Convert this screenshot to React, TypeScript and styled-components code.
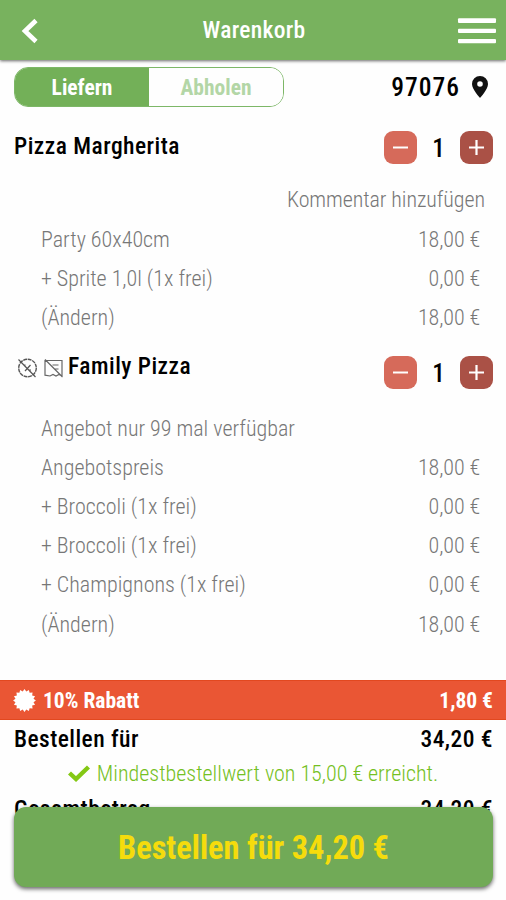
import React from "react";
import styled, { createGlobalStyle, css } from "styled-components";

const GlobalStyle = createGlobalStyle`
  *, *::before, *::after { box-sizing: border-box; }
  body {
    margin: 0;
    background: #fefefe;
    font-family: "Roboto Condensed", Roboto, "Liberation Sans", sans-serif;
    font-stretch: 75%;
    overflow: hidden;
  }
  button { font: inherit; border: 0; padding: 0; }
`;

const Screen = styled.div`
  display: flex;
  flex-direction: column;
  position: relative;
  height: 900px;
  overflow: hidden;
`;

const Header = styled.header`
  flex: none;
  display: grid;
  grid-template-columns: 60px 1fr 60px;
  align-items: center;
  height: 60px;
  background: #78b25e;
  color: #fff;
  box-shadow: 0 1px 3px rgba(0, 0, 0, 0.6);
`;

const HeaderIcon = styled.svg`
  display: block;
`;

const Title = styled.h1`
  margin: 0;
  padding-left: 2px;
  text-align: center;
  font-size: 23.5px;
  font-weight: 500;
  letter-spacing: 0.3px;
  line-height: 60px;
`;

const DeliveryBar = styled.section`
  flex: none;
  display: flex;
  justify-content: space-between;
  padding: 7px 18px 0 14px;
`;

const Toggle = styled.div`
  display: grid;
  grid-template-columns: 134px 1fr;
  width: 270px;
  height: 40px;
  border: 1px solid #7db767;
  border-radius: 14px;
  overflow: hidden;
`;

const ToggleOption = styled.button<{ $active?: boolean }>`
  background: ${(p) => (p.$active ? "#73b058" : "#fefefe")};
  color: ${(p) => (p.$active ? "#fff" : "#b3d6a6")};
  font-size: 21.5px;
  font-weight: 700;
`;

const Postcode = styled.div`
  display: flex;
  align-items: center;
  gap: 12px;
  font-size: 25.5px;
  font-weight: 500;
  letter-spacing: 1px;
`;

const Product = styled.section<{ $height: number }>`
  flex: none;
  height: ${(p) => p.$height}px;
`;

const ProductHead = styled.div<{ $height: number; $top: number }>`
  display: flex;
  justify-content: space-between;
  align-items: flex-start;
  height: ${(p) => p.$height}px;
  padding: ${(p) => p.$top}px 13px 0 14px;
`;

const ProductName = styled.h2<{ $lift: number }>`
  display: flex;
  align-items: center;
  margin: -${(p) => p.$lift}px 0 0;
  font-size: 23.5px;
  font-weight: 500;
  letter-spacing: 0.47px;
  line-height: 30px;
`;

const Flags = styled.span`
  display: flex;
  gap: 6px;
  margin: 3px 4px 0 4px;
`;

const Stepper = styled.div`
  display: grid;
  grid-template-columns: 33px 43px 33px;
  align-items: center;
  text-align: center;
  font-size: 25px;
  font-weight: 500;
  line-height: 33px;
`;

const Quantity = styled.span`
  padding-top: 1px;
  height: 33px;
`;

const StepButton = styled.button<{ $tone: string }>`
  display: flex;
  align-items: center;
  justify-content: center;
  height: 33px;
  border-radius: 9px;
  background: ${(p) => p.$tone};
`;

const muted = css`
  font-size: 22px;
  font-weight: 300;
  color: #777;
`;

const Comment = styled.div`
  ${muted}
  height: 39px;
  line-height: 39px;
  padding-right: 21px;
  text-align: right;
  letter-spacing: -0.08px;
`;

const Line = styled.div`
  ${muted}
  display: flex;
  justify-content: space-between;
  height: 39.2px;
  line-height: 41px;
  padding: 0 26px 0 41px;
`;

const Price = styled.span`
  letter-spacing: -0.1px;
`;

const Discount = styled.div`
  flex: none;
  display: flex;
  align-items: center;
  height: 40px;
  padding: 0 13px;
  background: #ea5634;
  border: solid #e2481f;
  border-width: 1px 0;
  color: #fff;
  font-size: 21.5px;
  font-weight: 700;
`;

const DiscountLabel = styled.span`
  flex: 1;
  padding-left: 7px;
`;

const Total = styled.div`
  flex: none;
  display: flex;
  justify-content: space-between;
  height: 36px;
  line-height: 38.5px;
  padding: 0 13px 0 14px;
  font-size: 23.5px;
  font-weight: 500;
  letter-spacing: 0.45px;
`;

const Notice = styled.div`
  flex: none;
  display: flex;
  align-items: center;
  justify-content: center;
  gap: 7px;
  height: 34px;
  font-size: 22px;
  font-weight: 300;
  color: #74c022;
`;

const OrderButton = styled.button`
  position: absolute;
  left: 14px;
  right: 13px;
  bottom: 13px;
  height: 80px;
  padding-top: 1px;
  border-radius: 12px;
  background: #71aa57;
  color: #f5dc0c;
  font-size: 32.4px;
  font-weight: 700;
  box-shadow: 0 2px 4px rgba(0, 0, 0, 0.6);
`;

function QuantityStepper() {
  return (
    <Stepper>
      <StepButton $tone="#d66a5a" aria-label="Weniger">
        <svg width="17" height="17" viewBox="0 0 17 17" stroke="#fff" strokeWidth="2">
          <path d="M1 8.5h15" />
        </svg>
      </StepButton>
      <Quantity>1</Quantity>
      <StepButton $tone="#aa5146" aria-label="Mehr">
        <svg width="17" height="17" viewBox="0 0 17 17" stroke="#fff" strokeWidth="2.2">
          <path d="M1 8.5h15M8.5 1v15" />
        </svg>
      </StepButton>
    </Stepper>
  );
}

function NoDiscountIcon() {
  return (
    <svg width="20" height="20" viewBox="0 0 20 20" fill="none" stroke="#555" strokeWidth="1">
      <circle cx="9.5" cy="10" r="8.8" strokeWidth="1.4" strokeDasharray="3.9 0.7" />
      <path d="M0.5 1.5 17.5 19M6 7l1.5 0M12.5 7 7 13M11 12h2" strokeWidth="1.2" />
    </svg>
  );
}

function NoCouponIcon() {
  return (
    <svg width="20" height="20" viewBox="0 0 20 20" fill="none" stroke="#666" strokeWidth="1.2">
      <path d="M1 2.5h17v15.5l-3-1.5-3 1.5-3-1.5-3 1.5-5-.8zM1 1.500 18.500 19M8.500 7h6M10.500 11h4" />
    </svg>
  );
}

const badge = Array.from({ length: 32 }, (_, i) => {
  const r = i % 2 ? 9.2 : 11.4;
  const a = (i * Math.PI) / 16;
  return `${(11.5 + r * Math.sin(a)).toFixed(2)},${(11.5 - r * Math.cos(a)).toFixed(2)}`;
}).join(" ");

const margherita = [
  ["Party 60x40cm", "18,00 €"],
  ["+ Sprite 1,0l (1x frei)", "0,00 €"],
  ["(Ändern)", "18,00 €"],
];

const family = [
  ["Angebot nur 99 mal verfügbar", ""],
  ["Angebotspreis", "18,00 €"],
  ["+ Broccoli (1x frei)", "0,00 €"],
  ["+ Broccoli (1x frei)", "0,00 €"],
  ["+ Champignons (1x frei)", "0,00 €"],
  ["(Ändern)", "18,00 €"],
];

function Lines({ items }: { items: string[][] }) {
  return (
    <>
      {items.map(([label, price], i) => (
        <Line key={i}>
          <span>{label}</span>
          <Price>{price}</Price>
        </Line>
      ))}
    </>
  );
}

export default function App() {
  return (
    <Screen>
      <GlobalStyle />
      <Header>
        <HeaderIcon width="60" height="60" fill="none" stroke="#fff" strokeWidth="4.6">
          <path d="M36 20.5 25 31l11 10.5" />
        </HeaderIcon>
        <Title>Warenkorb</Title>
        <HeaderIcon width="60" height="60" fill="#fff">
          <rect x="12" y="18.3" width="38" height="4.6" rx="1" />
          <rect x="12" y="28.7" width="38" height="4.4" rx="1" />
          <rect x="12" y="38.9" width="38" height="4.4" rx="1" />
        </HeaderIcon>
      </Header>
      <DeliveryBar>
        <Toggle>
          <ToggleOption $active>Liefern</ToggleOption>
          <ToggleOption>Abholen</ToggleOption>
        </Toggle>
        <Postcode>
          97076
          <svg width="16" height="22" viewBox="0 0 16 22">
            <path
              fill="#111"
              fillRule="evenodd"
              d="M8 0a8 8 0 0 0-8 8c0 5.5 8 14 8 14s8-8.5 8-14a8 8 0 0 0-8-8zm0 5.2a2.8 2.8 0 1 1 0 5.6 2.8 2.8 0 0 1 0-5.6z"
            />
          </svg>
        </Postcode>
      </DeliveryBar>
      <Product $height={230}>
        <ProductHead $height={73} $top={24}>
          <ProductName $lift={0}>Pizza Margherita</ProductName>
          <QuantityStepper />
        </ProductHead>
        <Comment>Kommentar hinzufügen</Comment>
        <Lines items={margherita} />
      </Product>
      <Product $height={343}>
        <ProductHead $height={70.6} $top={19}>
          <ProductName $lift={5}>
            <Flags>
              <NoDiscountIcon />
              <NoCouponIcon />
            </Flags>
            Family Pizza
          </ProductName>
          <QuantityStepper />
        </ProductHead>
        <Lines items={family} />
      </Product>
      <Discount>
        <svg width="23" height="23" viewBox="0 0 23 23">
          <polygon points={badge} fill="#fff" />
        </svg>
        <DiscountLabel>10% Rabatt</DiscountLabel>
        <span>1,80 €</span>
      </Discount>
      <Total>
        <span>Bestellen für</span>
        <span>34,20 €</span>
      </Total>
      <Notice>
        <svg width="22" height="17" viewBox="0 0 22 17" fill="none" stroke="#84c814" strokeWidth="4.4">
          <path d="M1.5 8 8 14 20.5 2" />
        </svg>
        Mindestbestellwert von 15,00 € erreicht.
      </Notice>
      <Total>
        <span>Gesamtbetrag</span>
        <span>34,20 €</span>
      </Total>
      <OrderButton>Bestellen für 34,20 €</OrderButton>
    </Screen>
  );
}
